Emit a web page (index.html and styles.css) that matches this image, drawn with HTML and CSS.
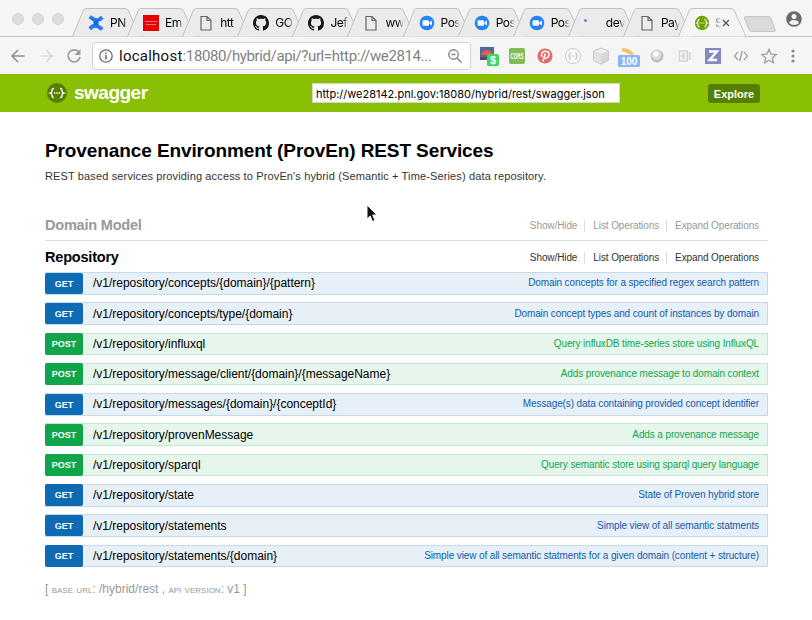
FILE: index.html
```html
<!DOCTYPE html>
<html lang="en">
<head>
<meta charset="utf-8">
<title>Swagger UI</title>
<link rel="stylesheet" href="styles.css">
</head>
<body>
<svg class="defs" width="0" height="0">
  <symbol id="shape" viewBox="0 0 70 29"><path class="outline" d="M0.5 28.5 L11 3 Q12 .5 14 .5 H53 Q55.500 .5 56.500 3 L68 28.500"/></symbol>
  <symbol id="page" viewBox="0 0 16 16"><path d="M3 1.500h6l4 4v9.500H3zM9 1.500v4h4" fill="none" stroke="#666" stroke-width="1.200"/></symbol>
  <symbol id="github" viewBox="0 0 16 16"><path fill="#171515" d="M8 0C3.580 0 0 3.580 0 8c0 3.540 2.290 6.530 5.470 7.590.4.070.55-.17.55-.38 0-.19-.01-.82-.01-1.490-2.010.37-2.530-.49-2.690-.94-.09-.23-.48-.94-.82-1.130-.28-.15-.68-.52-.01-.53.63-.01 1.080.58 1.230.82.72 1.210 1.870.87 2.330.66.07-.52.28-.87.51-1.070-1.780-.2-3.640-.89-3.640-3.950 0-.87.31-1.590.82-2.150-.08-.2-.36-1.020.08-2.120 0 0 .67-.21 2.200.82.64-.18 1.320-.27 2-.27s1.360.09 2 .27c1.530-1.040 2.200-.82 2.200-.82.44 1.100.16 1.920.08 2.120.51.56.82 1.270.82 2.150 0 3.070-1.870 3.750-3.650 3.950.29.25.54.73.54 1.480 0 1.070-.01 1.930-.01 2.200 0 .21.15.46.55.38A8.010 8.010 0 0 0 16 8c0-4.420-3.580-8-8-8z"/></symbol>
  <symbol id="zoom" viewBox="0 0 16 16"><circle cx="8" cy="8" r="7.300" fill="#2484f4"/><rect x="3.500" y="5.300" width="6.500" height="5.400" rx="1.200" fill="#fff"/><path d="M10.400 7.200l2.500-1.700v5l-2.500-1.700z" fill="#fff"/></symbol>
  <symbol id="braces" viewBox="0 0 20 20"><path d="M7 5.500Q5 5.500 5 7.500T3.500 10Q5 10.300 5 12.500T7 14.500M13 5.500Q15 5.500 15 7.500T16.500 10Q15 10.300 15 12.500T13 14.500" fill="none" stroke="currentColor" stroke-width="1.400"/><path d="M7 10h1.400M9.300 10h1.400M11.600 10H13" stroke="currentColor" stroke-width="1.500"/></symbol>
</svg>
<div class="browser">
  <div class="tabstrip">
    <div class="lights"><i></i><i></i><i></i></div>
    <div class="tab"><svg class="shape"><use href="#shape"/></svg><svg class="ico" viewBox="0 0 16 16"><path d="M.5 3 3 .3Q7 3.500 9 3.300T13 .8l2.600 3Q12 7.500 8.500 7.200T.5 3z" fill="#247cf5"/><path d="M15.500 13 13 15.700Q9 12.500 7 12.700T3 15.200L.4 12.200Q4 8.500 7.500 8.800T15.500 13z" fill="#247cf5"/><path d="M5.500 5.500h5v5h-5z" fill="#1767dd"/></svg><span>PN</span></div>
    <div class="tab"><svg class="shape"><use href="#shape"/></svg><svg class="ico" viewBox="0 0 16 16"><path fill="#e90000" d="M0 0h16v16H0z"/><path d="M2 6.500h12M3 9.500h10" stroke="#fff" stroke-dasharray="1.400 .4" opacity=".6"/></svg><span>Em</span></div>
    <div class="tab"><svg class="shape"><use href="#shape"/></svg><svg class="ico"><use href="#page"/></svg><span>htt</span></div>
    <div class="tab"><svg class="shape"><use href="#shape"/></svg><svg class="ico"><use href="#github"/></svg><span>GO</span></div>
    <div class="tab"><svg class="shape"><use href="#shape"/></svg><svg class="ico"><use href="#github"/></svg><span>Jef</span></div>
    <div class="tab"><svg class="shape"><use href="#shape"/></svg><svg class="ico"><use href="#page"/></svg><span>ww</span></div>
    <div class="tab"><svg class="shape"><use href="#shape"/></svg><svg class="ico"><use href="#zoom"/></svg><span>Pos</span></div>
    <div class="tab"><svg class="shape"><use href="#shape"/></svg><svg class="ico"><use href="#zoom"/></svg><span>Pos</span></div>
    <div class="tab"><svg class="shape"><use href="#shape"/></svg><svg class="ico"><use href="#zoom"/></svg><span>Pos</span></div>
    <div class="tab"><svg class="shape"><use href="#shape"/></svg><svg class="ico" viewBox="0 0 16 16"><circle cx="1.500" cy="5.500" r="1.500" fill="#4b8cf5"/></svg><span>dev</span></div>
    <div class="tab"><svg class="shape"><use href="#shape"/></svg><svg class="ico"><use href="#page"/></svg><span>Pay</span></div>
    <div class="tab active"><svg class="shape"><use href="#shape"/></svg><svg class="ico swag" viewBox="0 0 20 20"><circle cx="10" cy="10" r="9" fill="#69a300"/><use href="#braces"/></svg><span>S</span><svg class="close" viewBox="0 0 8 8"><path d="M1 1l6 6M7 1 1 7" stroke="#555" stroke-width="1.300"/></svg></div>
    <svg class="newtab" viewBox="0 0 34 17"><path d="M3 .5h22q2 0 3 2l4 11q1 2-1 2H9q-2 0-3-2L1.500 3Q.5.500 3 .5z" fill="#dadada" stroke="#c6c6c6"/></svg>
    <svg class="user" viewBox="0 0 16 16"><circle cx="8" cy="8" r="7.800" fill="#666b70"/><circle cx="8" cy="5.400" r="2.500" fill="#f5f5f5"/><path d="M3 12q1-3 5-3t5 3q-2 2-5 2t-5-2z" fill="#f5f5f5"/></svg>
  </div>
  <div class="toolbar">
    <svg class="nav" viewBox="0 0 16 16"><path d="M14.500 8H2M8 2 2 8l6 6" fill="none" stroke="#8d9095" stroke-width="1.600"/></svg>
    <svg class="nav" viewBox="0 0 16 16"><path d="M1.500 8h12M8 2l6 6-6 6" fill="none" stroke="#dadada" stroke-width="1.600"/></svg>
    <svg class="nav" viewBox="0 0 16 16"><path d="M13 4.300A6 6 0 1 0 14 9" fill="none" stroke="#9a9da1" stroke-width="1.700"/><path d="M14.500 1v6h-6z" fill="#9a9da1"/></svg>
    <div class="omnibox">
      <svg class="info" viewBox="0 0 14 14"><circle cx="7" cy="7" r="6.200" fill="none" stroke="#64696e" stroke-width="1.300"/><path d="M7 6v4.500M7 3.500V5" stroke="#64696e" stroke-width="1.500"/></svg>
      <span class="url"><b>localhost</b>:18080/hybrid/api/?url=http://we2814...</span>
      <svg class="mag" viewBox="0 0 14 14"><circle cx="5.500" cy="5.500" r="4.700" fill="none" stroke="#858585" stroke-width="1.400"/><path d="M9 9l4.500 4.500M3.500 5.500h4" stroke="#858585" stroke-width="1.500"/></svg>
    </div>
    <div class="exts">
      <svg viewBox="0 0 20 20"><path d="M1 1h14v13H1z" fill="#506a98"/><path d="M2 9q1-5 6-5 5 1 6 5z" fill="#ee594b"/><path d="M1 11h13v3H1z" fill="#43536f"/><rect x="8" y="8" width="12" height="12" rx="1.500" fill="#3fd760"/><text x="14" y="18" class="dollar">$</text></svg>
      <svg viewBox="0 0 20 20"><rect x="2" y="2" width="16" height="16" rx="2" fill="#7fbb56"/><text x="10" y="13" class="cors" textLength="13" lengthAdjust="spacingAndGlyphs">CORS</text></svg>
      <svg viewBox="0 0 20 20"><circle cx="10" cy="10" r="7.600" fill="#e46a6d"/><path d="M7.200 11Q5 6 10 5.200q4-.2 4 3-.5 4-3 4-1.500 0-1.700-1.200M10.300 7.500 8 15.500" fill="none" stroke="#fff" stroke-width="1.500"/></svg>
      <svg viewBox="0 0 20 20" color="#aaa"><circle cx="10" cy="10" r="7.500" fill="#fafafa" stroke="#c9c9c9"/><g transform="translate(3 3) scale(.7)"><use href="#braces" width="20" height="20"/></g></svg>
      <svg viewBox="0 0 20 20"><path d="M10 2l7.500 3v9.500L10 18l-7.500-3.500V5z" fill="#d8d8d8" stroke="#c8c8c8"/><path d="M3 5.500l7 2.500 7-2.500L10 2.800z" fill="#efefef"/><path d="M10 8v9.500l-7-3V5.500z" fill="#e4e4e4"/></svg>
      <svg class="wide" viewBox="0 0 22 20"><path d="M4 1q8-.5 12 6.500h-5Q9 5 4 4.500z" fill="#f8c163"/><rect y="8" width="22" height="12" rx="1.500" fill="#86b6f8"/><text x="11" y="18" class="hundred">100</text></svg>
      <svg viewBox="0 0 20 20"><circle cx="10" cy="10" r="6.500" fill="#bdbdbd"/><circle cx="9.500" cy="9" r="5" fill="#ddd"/><circle cx="9" cy="8" r="2.500" fill="#fff"/></svg>
      <svg viewBox="0 0 20 20"><path d="M3 2h14v16H3z" fill="#fafafa"/><rect x="4.500" y="5" width="8" height="10" fill="#f2f2f2" stroke="#d0d0d0" stroke-width="1.500"/><path d="M7 8h3M7 10h3M7 12h3M15 6v8" stroke="#d0d0d0" stroke-width="1.500"/></svg>
      <svg viewBox="0 0 20 20"><path d="M2 2h16v16H2z" fill="#8089c2"/><path d="M6 5.500h8L6.500 14H14" fill="none" stroke="#fff" stroke-width="2.400"/></svg>
      <svg viewBox="0 0 20 20"><path d="M7 6 3.500 10 7 14M13 6l3.500 4-3.500 4M11.300 5 8.700 15" fill="none" stroke="#a9a9a9" stroke-width="1.500"/></svg>
      <svg viewBox="0 0 20 20"><path d="M10 3.500l2.100 4.600 5 .5-3.800 3.300 1.100 4.900-4.400-2.600-4.400 2.600 1.100-4.900-3.800-3.300 5-.5z" fill="none" stroke="#a2a2a2" stroke-width="1.400"/></svg>
      <svg class="more" viewBox="0 0 20 20"><g fill="#86888b"><circle cx="10" cy="5" r="1.600"/><circle cx="10" cy="10" r="1.600"/><circle cx="10" cy="15" r="1.600"/></g></svg>
    </div>
  </div>
</div>
<header class="swagger-bar">
  <svg class="logo" viewBox="0 0 20 20"><circle cx="10" cy="10" r="10" fill="#547f00"/><use href="#braces"/></svg>
  <span class="brand">swagger</span>
  <div class="spec">http://we28142.pnl.gov:18080/hybrid/rest/swagger.json</div>
  <div class="explore">Explore</div>
</header>
<main>
  <h1>Provenance Environment (ProvEn) REST Services</h1>
  <p class="about">REST based services providing access to ProvEn's hybrid (Semantic + Time-Series) data repository.</p>
  <section class="resource muted"><h2>Domain Model</h2><ul><li>Show/Hide</li><li>List Operations</li><li>Expand Operations</li></ul></section>
  <section class="resource"><h2>Repository</h2><ul><li>Show/Hide</li><li>List Operations</li><li>Expand Operations</li></ul></section>
  <div class="ops">
    <div class="op get"><b>GET</b><span class="path">/v1/repository/concepts/{domain}/{pattern}</span><span class="desc">Domain concepts for a specified regex search pattern</span></div>
    <div class="op get"><b>GET</b><span class="path">/v1/repository/concepts/type/{domain}</span><span class="desc">Domain concept types and count of instances by domain</span></div>
    <div class="op post"><b>POST</b><span class="path">/v1/repository/influxql</span><span class="desc">Query influxDB time-series store using InfluxQL</span></div>
    <div class="op post"><b>POST</b><span class="path">/v1/repository/message/client/{domain}/{messageName}</span><span class="desc">Adds provenance message to domain context</span></div>
    <div class="op get"><b>GET</b><span class="path">/v1/repository/messages/{domain}/{conceptId}</span><span class="desc">Message(s) data containing provided concept identifier</span></div>
    <div class="op post"><b>POST</b><span class="path">/v1/repository/provenMessage</span><span class="desc">Adds a provenance message</span></div>
    <div class="op post"><b>POST</b><span class="path">/v1/repository/sparql</span><span class="desc">Query semantic store using sparql query language</span></div>
    <div class="op get"><b>GET</b><span class="path">/v1/repository/state</span><span class="desc">State of Proven hybrid store</span></div>
    <div class="op get"><b>GET</b><span class="path">/v1/repository/statements</span><span class="desc">Simple view of all semantic statments</span></div>
    <div class="op get"><b>GET</b><span class="path">/v1/repository/statements/{domain}</span><span class="desc">Simple view of all semantic statments for a given domain (content + structure)</span></div>
  </div>
  <footer>[ <span>base url</span>: /hybrid/rest , <span>api version</span>: v1 ]</footer>
</main>
<svg class="cursor" viewBox="0 0 12 19"><path d="M1 1v14l3.200-3 2.300 5.500 2.500-1L6.700 11H11z" fill="#111" stroke="#fff" stroke-width="1"/></svg>
</body>
</html>
```
FILE: styles.css
```css
* { box-sizing: border-box; }
body { margin: 0; width: 812px; height: 620px; overflow: hidden; background: #fff; font-family: "Liberation Sans", sans-serif; color: #000; }
svg { display: block; flex: none; }
.defs { position: absolute; }
h1, h2, p, ul { margin: 0; padding: 0; }

.browser { height: 74px; background: #f5f5f5; font-family: Inter, sans-serif; }
.tabstrip { height: 37px; display: flex; align-items: flex-end; position: relative; border-bottom: 1px solid #c4c4c4; }
.lights { width: 72px; height: 36px; flex: none; display: flex; gap: 8px; padding: 13px 0 0 12px; }
.lights i { width: 12px; height: 12px; border-radius: 50%; background: #dcdcdc; border: 1px solid #d2d2d2; }
.tab { position: relative; flex: none; width: 55.1px; height: 28px; display: flex; align-items: center; padding: 1px 0 0 16px; font-size: 12px; }
.shape { position: absolute; left: 0; top: 0; width: 70px; height: 29px; fill: #ebebeb; stroke: #c2c2c2; }
.active .shape { fill: #f5f5f5; }
.ico { position: relative; width: 16px; height: 16px; }
.tab span { position: relative; margin-left: 6px; width: 21px; flex: none; white-space: nowrap; letter-spacing: -.5px; -webkit-mask-image: linear-gradient(90deg, #000 60%, transparent 90%); mask-image: linear-gradient(90deg, #000 60%, transparent 90%); }
.tab.active span { width: 8px; margin-left: 5px; color: #888; -webkit-mask-image: linear-gradient(90deg, #000 30%, transparent 75%); mask-image: linear-gradient(90deg, #000 30%, transparent 75%); }
.swag { color: #fff; }
.close { position: relative; width: 8px; height: 8px; margin-left: -1px; }
.newtab { width: 34px; height: 17px; margin: 0 0 3px 10px; }
.user { width: 16px; height: 16px; margin: 0 0 9px 9px; }
.toolbar { height: 37px; display: flex; align-items: center; padding-left: 10px; }
.nav { width: 16px; height: 16px; margin-right: 12px; }
.nav:nth-child(3) { margin-right: 10px; }
.omnibox { width: 379px; height: 28px; border: 1px solid #d2d2d2; border-radius: 4px; background: #fff; display: flex; align-items: center; padding: 0 8px 0 6px; flex: none; }
.info { width: 14px; height: 14px; }
.url { margin-left: 6px; width: 329px; white-space: nowrap; font: 15px Roboto, sans-serif; letter-spacing: -.38px; color: #818181; }
.url b { font-weight: 400; color: #111; letter-spacing: .25px; }
.mag { width: 14px; height: 14px; }
.exts { display: flex; margin-left: 8px; align-items: center; }
.exts svg { width: 20px; height: 20px; margin-right: 8px; }
.exts .wide { width: 22px; margin: 2px 7px 0 -1px; height: 20px; }
.exts .more { margin-left: -4px; }
.exts text { font-family: "Liberation Sans", sans-serif; font-weight: 700; fill: #fff; text-anchor: middle; }
.dollar { font-size: 11px; }
.cors { font-size: 8.5px; }
.hundred { font-size: 10px; }

.swagger-bar { height: 38px; background: #89bf04; display: flex; align-items: center; padding-left: 47px; color: #fff; }
.logo { width: 20px; height: 20px; }
.brand { margin-left: 7px; width: 238px; font-size: 19px; font-weight: 700; letter-spacing: -.5px; }
.spec { width: 308px; height: 20px; flex: none; background: #fff; border: 1px solid #d4d9c5; color: #000; font: 11px/20px Inter, sans-serif; padding-left: 3px; white-space: nowrap; }
.explore { margin-left: 88px; width: 52px; height: 19px; border-radius: 3px; background: #547f00; text-align: center; font: 700 11px/20px "Liberation Sans", sans-serif; }

main { width: 723px; margin-left: 45px; }
h1 { padding-top: 28px; font-size: 19px; line-height: 22px; letter-spacing: -.1px; white-space: nowrap; }
.about { margin-top: 7px; font-size: 11px; line-height: 14px; letter-spacing: .135px; color: #333; white-space: nowrap; }
.resource { height: 31px; display: flex; justify-content: space-between; align-items: center; }
.resource.muted { height: 32px; margin-top: 26px; border-bottom: 1px solid #ddd; }
h2 { font-size: 14.5px; line-height: 20px; letter-spacing: -.2px; }
.muted { color: #999; }
.resource ul { display: flex; list-style: none; font-size: 10px; line-height: 12px; letter-spacing: -.1px; padding: 2px 9px 0 0; color: #333; }
.resource.muted ul { color: #999; padding-top: 3px; }
.resource li + li { margin-left: 7px; padding-left: 8px; border-left: 1px solid #ddd; }
.ops { display: flex; flex-direction: column; gap: 7.700px; }
.op { height: 22.600px; display: flex; align-items: center; border: 1px solid #c3d9ec; background: #e7f0f7; }
.op b { width: 38px; height: 21.600px; margin-left: -1px; border-radius: 2px; background: #0f6ab4; color: #fff; text-align: center; font-size: 9px; line-height: 22px; flex: none; }
.path { margin-left: 10px; font-size: 12px; line-height: 20px; letter-spacing: -.02px; white-space: nowrap; }
.desc { margin-left: auto; padding-right: 8px; font-size: 10px; line-height: 20px; letter-spacing: -.115px; color: #0f5bab; white-space: nowrap; }
.post { background: #e7f6ec; border-color: #c3e8d1; }
.post b { background: #10a54a; }
.post .desc { color: #10a54a; }
footer { margin-top: 14px; font-size: 12px; line-height: 16px; color: #999; white-space: nowrap; }
footer span { font-variant: small-caps; }
.cursor { position: absolute; left: 366px; top: 204px; width: 12px; height: 19px; }
```
